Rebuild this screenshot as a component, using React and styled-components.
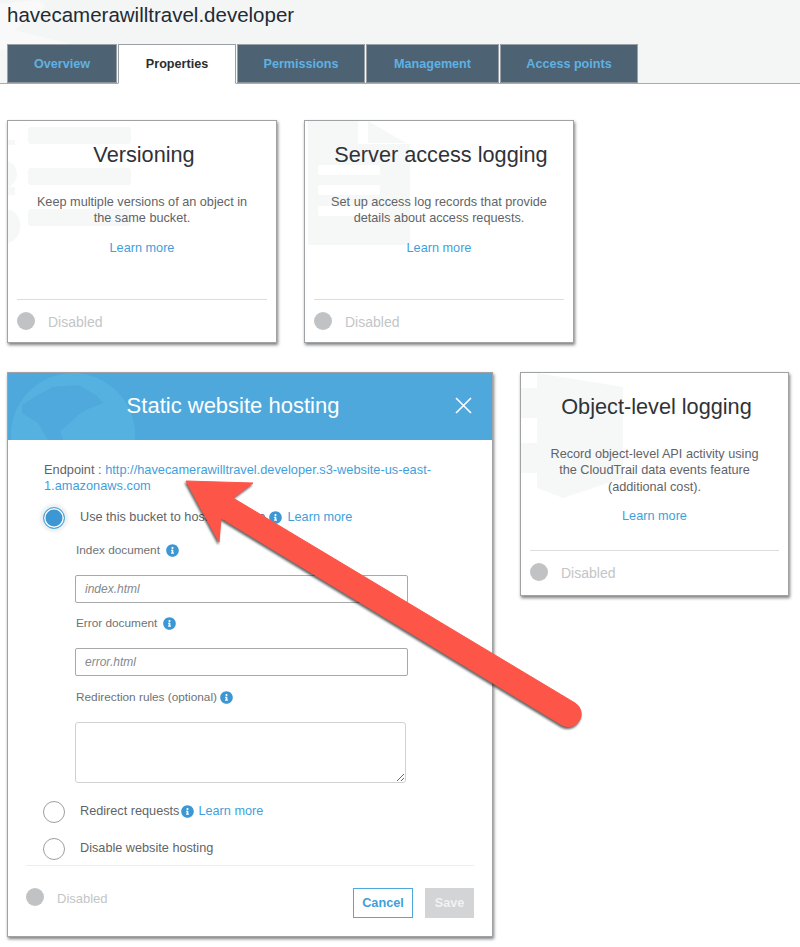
import React from "react"
import styled, { createGlobalStyle } from "styled-components"
import { FaInfoCircle } from "react-icons/fa"

const GlobalStyle = createGlobalStyle`
  html, body {
    margin: 0;
    background: #fff;
  }
  * {
    box-sizing: border-box;
  }
  body {
    font-family: "Liberation Sans", Arial, sans-serif;
  }
`

const Page = styled.div`
  position: relative;
  width: 800px;
  height: 947px;
  overflow: hidden;
`

const Header = styled.header`
  position: relative;
  height: 84px;
  padding: 4px 0 0 7px;
  background: #f4f5f5;
  border-bottom: 1px solid #a9abad;
`

const BucketName = styled.h1`
  position: relative;
  margin: 0;
  height: 40px;
  font-size: 20.5px;
  line-height: 22px;
  font-weight: 400;
  color: #222b33;
`

const Tabs = styled.nav`
  position: relative;
  display: flex;
  gap: 1px;
  height: 40px;
`

const Tab = styled.div`
  display: flex;
  align-items: center;
  justify-content: center;
  width: ${(p) => p.$width}px;
  height: ${(p) => (p.$active ? 40 : 39)}px;
  font-size: 12.6px;
  font-weight: 700;
  color: ${(p) => (p.$active ? "#2a2e33" : "#5fb1e4")};
  background: ${(p) => (p.$active ? "#fff" : "#4d6373")};
  border: 1px solid #9aa0a5;
  border-bottom-color: ${(p) => (p.$active ? "#fff" : "#8b9297")};
`

const Content = styled.main`
  display: flex;
  flex-direction: column;
  gap: 29px;
  padding: 36px 0 0 7px;
`

const Row = styled.div`
  display: flex;
  align-items: flex-start;
  gap: 27px;
`

const Card = styled.section`
  position: relative;
  display: flex;
  flex-direction: column;
  overflow: hidden;
  width: ${(p) => p.$width || 270}px;
  height: ${(p) => p.$height || 223}px;
  background: #fff;
  border: 1px solid #a0a3a5;
  box-shadow: 1px 2px 3px rgba(0, 0, 0, 0.5);
  text-align: center;
`

const Watermark = styled.svg`
  position: absolute;
  top: 0;
  left: 0;
`

const CardBody = styled.div`
  position: relative;
  flex: 1;
  padding: 21px 10px 0;
`

const CardTitle = styled.h2`
  margin: 0 0 26px;
  padding-left: 4px;
  font-size: 21.7px;
  line-height: 26px;
  font-weight: 400;
  color: #2f3337;
`

const CardText = styled.p`
  margin: 0 0 11px;
  font-size: 12.7px;
  line-height: 16.4px;
  color: #5f6468;
`

const LearnLink = styled.a`
  font-size: 12.7px;
  line-height: 16px;
  color: #3f9fdb;
`

const CardFooter = styled.div`
  position: relative;
  display: flex;
  align-items: center;
  gap: 13px;
  margin: 0 9px;
  height: ${(p) => p.$height || 43}px;
  padding-bottom: ${(p) => (p.$height ? 3 : 0)}px;
  border-top: 1px solid #dcdddd;
`

const StatusDot = styled.span`
  width: 18px;
  height: 18px;
  border-radius: 50%;
  background: #c0c2c3;
`

const StatusText = styled.span`
  margin-top: 2px;
  font-size: ${(p) => p.$size || 14}px;
  color: #c3c5c6;
`

const Modal = styled.section`
  width: 486px;
  height: 565px;
  background: #fff;
  border: 1px solid #a0a3a5;
  box-shadow: 1px 2px 3px rgba(0, 0, 0, 0.5);
`

const ModalHead = styled.div`
  position: relative;
  display: flex;
  align-items: center;
  justify-content: center;
  height: 67px;
  padding-right: 34px;
  overflow: hidden;
  background: #4ea8dc;
`

const ModalTitle = styled.h2`
  position: relative;
  margin: 0 0 1px;
  font-size: 22px;
  font-weight: 400;
  color: #fff;
`

const CloseIcon = styled.svg`
  position: absolute;
  top: 24px;
  right: 20px;
`

const ModalBody = styled.div`
  padding: 22px 0 0 36px;
`

const Endpoint = styled.p`
  margin: 0;
  width: 395px;
  font-size: 12.8px;
  line-height: 16px;
  color: #5f6468;
`

const Url = styled.a`
  color: #3f9fdb;
`

const Option = styled.div`
  display: flex;
  align-items: center;
  height: 22px;
  padding-bottom: 2px;
  margin-top: ${(p) => p.$top}px;
  font-size: 12.7px;
  color: #5f6468;
`

const Radio = styled.span`
  flex: none;
  width: 22px;
  height: 22px;
  margin: 0 15px -2px -1px;
  border-radius: 50%;
  border: 1px solid ${(p) => (p.$checked ? "#4ea8dc" : "#9b9fa2")};
  background: ${(p) => (p.$checked ? "#3d97d3" : "#fff")};
  box-shadow: ${(p) =>
    p.$checked ? "inset 0 0 0 1.5px #fff, 0 0 3px 3px #eeeff0" : "none"};
`

const Info = styled(FaInfoCircle)`
  flex: none;
  margin: ${(p) => p.$margin || "0 0 0 6px"};
  width: 13px;
  height: 13px;
  color: #3d97d3;
`

const Field = styled.div`
  padding-left: 31px;
`

const FieldLabel = styled.label`
  display: flex;
  align-items: center;
  height: 16px;
  margin: ${(p) => p.$top}px 0 17px 1px;
  font-size: 11.8px;
  color: #6d7276;
`

const TextInput = styled.input`
  display: block;
  width: 333px;
  height: 28px;
  padding: 0 9px;
  border: 1px solid #a6a8aa;
  border-radius: 2px;
  background: #fff;
  font: italic 12px "Liberation Sans", Arial, sans-serif;
  outline: none;
  &::placeholder {
    color: #85898c;
  }
`

const RulesInput = styled.textarea`
  display: block;
  width: 331px;
  height: 61px;
  border: 1px solid #cfd1d2;
  border-radius: 3px;
  background: #fff;
  outline: none;
`

const ModalRule = styled.hr`
  margin: 5px 18px 0;
  border: 0;
  border-top: 1px solid #eeeeee;
`

const ModalFooter = styled.div`
  display: flex;
  align-items: flex-start;
  margin: 22px 18px 0;
`

const DisabledGroup = styled.div`
  display: flex;
  align-items: center;
  gap: 13px;
  margin-right: auto;
`

const CancelButton = styled.button`
  width: 60px;
  height: 30px;
  margin-right: 12px;
  border: 1px solid #4ea8dc;
  background: #fff;
  font: 700 12.7px "Liberation Sans", Arial, sans-serif;
  color: #3f9fdb;
`

const SaveButton = styled.button`
  width: 49px;
  height: 30px;
  border: 0;
  background: #d2d4d5;
  font: 700 12.7px "Liberation Sans", Arial, sans-serif;
  color: #f1f2f2;
`

const ArrowLayer = styled.svg`
  position: absolute;
  top: 0;
  left: 0;
  pointer-events: none;
  filter: drop-shadow(-1px 2px 1px rgba(0, 0, 0, 0.6));
`

const tabs = [
  { label: "Overview", width: 110 },
  { label: "Properties", width: 118, active: true },
  { label: "Permissions", width: 128 },
  { label: "Management", width: 133 },
  { label: "Access points", width: 138 },
]

const HeaderMark = () => (
  <Watermark width="80" height="50" fill="#f9f9f9">
    <path d="M0 4 L38 0 L46 6 L14 30 L70 44 L0 50 Z" />
  </Watermark>
)

const ListMark = () => (
  <Watermark width="270" height="223" fill="#f6f7f7">
    <rect x="20" y="6" width="103" height="17" rx="3" />
    <rect x="20" y="47" width="103" height="17" rx="3" />
    <rect x="20" y="88" width="103" height="17" rx="3" />
    <rect x="-2" y="19" width="9" height="5" />
    <path d="M-2 40 A10 12 0 0 1 -2 66 Z" />
    <rect x="-2" y="66" width="9" height="8" />
    <path d="M-2 88 A11 13 0 0 1 -2 122 Z" />
  </Watermark>
)

const DocMark = () => (
  <Watermark width="270" height="223">
    <path d="M3 0 H53 V23 H105 V124 H3 Z" fill="#f6f7f7" />
    <path d="M63 0 L101 22 H63 Z" fill="#f6f7f7" />
    <rect x="13" y="44" width="62" height="10" rx="2" fill="#fff" />
    <rect x="13" y="64" width="62" height="10" rx="2" fill="#fff" />
    <rect x="13" y="85" width="62" height="10" rx="2" fill="#fff" />
  </Watermark>
)

const HexMark = () => (
  <Watermark width="270" height="224" fill="#f6f7f7">
    <path d="M16 0 L102 14 V105 L42 125 L16 115 Z" />
    <rect x="0" y="15" width="16" height="30" />
    <rect x="0" y="70" width="16" height="30" />
  </Watermark>
)

const GlobeMark = () => (
  <Watermark width="150" height="67">
    <circle cx="65" cy="62" r="62" fill="#55b1df" />
    <path
      d="M14 32 L30 22 L45 14 L70 12 L88 22 L95 30 L80 36 L70 42 L62 50 L52 58 L55 67 L40 67 L30 50 L14 40 Z"
      fill="#4fa9dc"
    />
  </Watermark>
)

const CloseGlyph = () => (
  <CloseIcon width="17" height="17" viewBox="0 0 17 17">
    <path d="M1 1 L16 16 M16 1 L1 16" stroke="#fff" strokeWidth="1.6" fill="none" />
  </CloseIcon>
)

const FeatureCard = ({ width, height, footerHeight, mark, title, lines }) => (
  <Card $width={width} $height={height}>
    {mark}
    <CardBody>
      <CardTitle>{title}</CardTitle>
      <CardText>
        {lines.map((line) => (
          <React.Fragment key={line}>
            {line}
            <br />
          </React.Fragment>
        ))}
      </CardText>
      <LearnLink>Learn more</LearnLink>
    </CardBody>
    <CardFooter $height={footerHeight}>
      <StatusDot />
      <StatusText>Disabled</StatusText>
    </CardFooter>
  </Card>
)

export default function App() {
  return (
    <Page>
      <GlobalStyle />
      <Header>
        <HeaderMark />
        <BucketName>havecamerawilltravel.developer</BucketName>
        <Tabs>
          {tabs.map((tab) => (
            <Tab key={tab.label} $width={tab.width} $active={tab.active}>
              {tab.label}
            </Tab>
          ))}
        </Tabs>
      </Header>
      <Content>
        <Row>
          <FeatureCard
            mark={<ListMark />}
            title="Versioning"
            lines={["Keep multiple versions of an object in", "the same bucket."]}
          />
          <FeatureCard
            mark={<DocMark />}
            title="Server access logging"
            lines={["Set up access log records that provide", "details about access requests."]}
          />
        </Row>
        <Row>
          <Modal>
            <ModalHead>
              <GlobeMark />
              <ModalTitle>Static website hosting</ModalTitle>
              <CloseGlyph />
            </ModalHead>
            <ModalBody>
              <Endpoint>
                Endpoint : <Url>http://havecamerawilltravel.developer.s3-website-us-east-1.amazonaws.com</Url>
              </Endpoint>
              <Option $top={13}>
                <Radio $checked />
                Use this bucket to host a website
                <Info $margin="0 5px 0 4px" />
                <LearnLink>Learn more</LearnLink>
              </Option>
              <Field>
                <FieldLabel $top={13}>
                  Index document
                  <Info />
                </FieldLabel>
                <TextInput readOnly placeholder="index.html" />
                <FieldLabel $top={12}>
                  Error document
                  <Info />
                </FieldLabel>
                <TextInput readOnly placeholder="error.html" />
                <FieldLabel $top={13}>
                  Redirection rules (optional)
                  <Info $margin="0 0 0 3px" />
                </FieldLabel>
                <RulesInput readOnly />
              </Field>
              <Option $top={18}>
                <Radio />
                Redirect requests
                <Info $margin="0 4px 0 2px" />
                <LearnLink>Learn more</LearnLink>
              </Option>
              <Option $top={15}>
                <Radio />
                Disable website hosting
              </Option>
            </ModalBody>
            <ModalRule />
            <ModalFooter>
              <DisabledGroup>
                <StatusDot />
                <StatusText $size={13}>Disabled</StatusText>
              </DisabledGroup>
              <CancelButton>Cancel</CancelButton>
              <SaveButton>Save</SaveButton>
            </ModalFooter>
          </Modal>
          <FeatureCard
            width={269}
            height={224}
            footerHeight={45}
            mark={<HexMark />}
            title="Object-level logging"
            lines={[
              "Record object-level API activity using",
              "the CloudTrail data events feature",
              "(additional cost).",
            ]}
          />
        </Row>
      </Content>
      <ArrowLayer width="800" height="947" viewBox="0 0 800 947">
        <path
          d="M186 481 L253 483 L233 498 L575 703 A12 12 0 0 1 562 725 L221 518 L219 542 Z"
          fill="#fe5549"
          stroke="#fe5549"
          strokeLinejoin="round"
        />
      </ArrowLayer>
    </Page>
  )
}
